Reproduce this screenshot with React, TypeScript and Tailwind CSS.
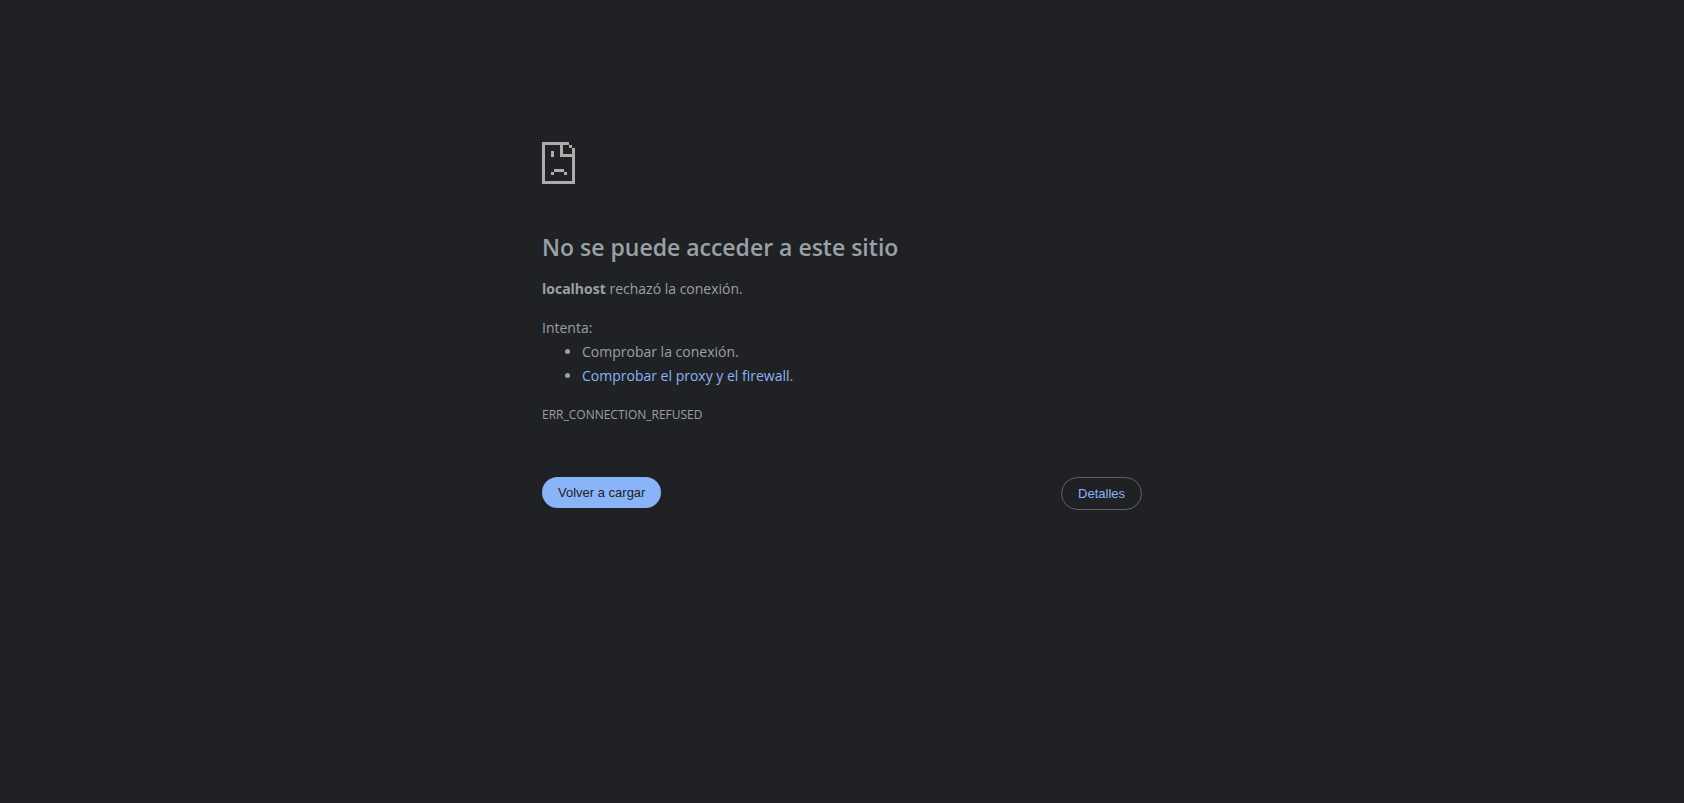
const ink = "#acacac";

function SadPage() {
  return (
    <svg className="block h-[42px] w-[33px]" viewBox="0 0 33 42" shapeRendering="crispEdges" aria-hidden="true">
      <path
        fill={ink}
        d="M0 0H27V3H21V12H33V42H0ZM3 3V39H30V15H18V3ZM27 3H30V6H27ZM30 6H33V12H30ZM9 9H12V15H9ZM12 27H22V30H12ZM9 30H12V33H9ZM22 30H25V33H22Z"
      />
    </svg>
  );
}

export default function App() {
  return (
    <div className="min-h-screen bg-[#202124] px-6 pt-[142px] font-['Open_Sans',sans-serif] text-sm leading-6 text-[#9aa0a6]">
      <main className="mx-auto max-w-[600px]">
        <SadPage />
        <h1 className="mt-12 text-[23px] leading-[30px] font-semibold">No se puede acceder a este sitio</h1>
        <p className="mt-[15px]">
          <strong className="font-bold">localhost</strong> rechazó la conexión.
        </p>
        <div className="mt-[15px]">
          <p>Intenta:</p>
          <ul className="list-disc pl-10">
            <li>Comprobar la conexión.</li>
            <li>
              <a href="#firewall" className="text-[#8ab4f8]">
                Comprobar el proxy y el firewall
              </a>
              .
            </li>
          </ul>
        </div>
        <p className="mt-[15px] text-xs leading-6">ERR_CONNECTION_REFUSED</p>
        <div className="mt-[50px] flex items-start justify-between font-['Liberation_Sans',sans-serif] text-[13px] leading-[15px]">
          <button type="button" className="rounded-full bg-[#8ab4f8] px-4 py-2 text-[#202124]">
            Volver a cargar
          </button>
          <button type="button" className="rounded-full border border-[#5f6368] px-4 py-2 text-[#8ab4f8]">
            Detalles
          </button>
        </div>
      </main>
    </div>
  );
}
